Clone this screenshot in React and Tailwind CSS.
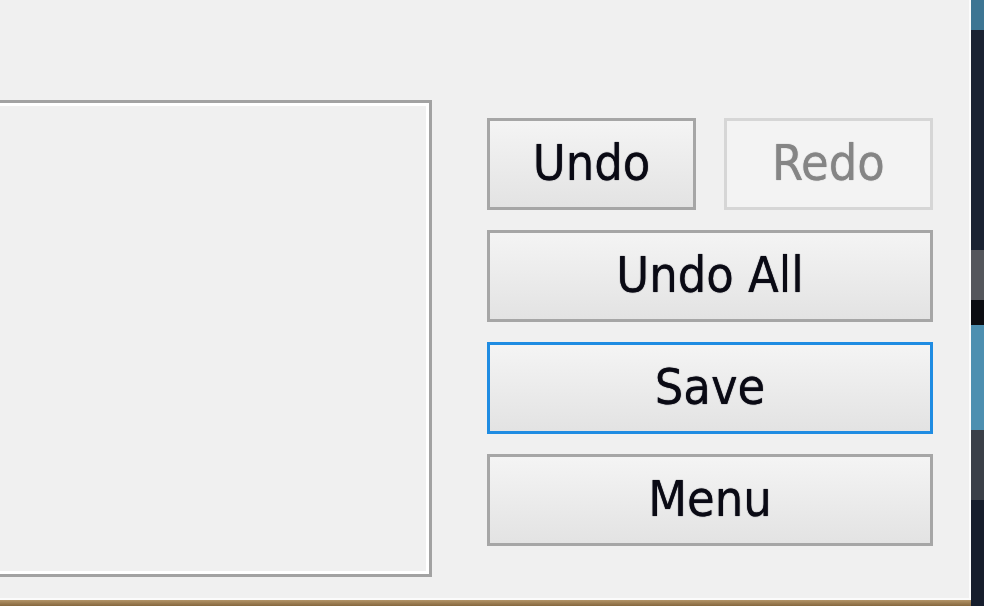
const font = { fontFamily: '"DejaVu Sans Condensed", "DejaVu Sans", "Liberation Sans", sans-serif' };

function WinButton({ label, disabled, focused, className = '' }) {
  const border = focused
    ? 'border-[#1f8ce2]'
    : disabled
      ? 'border-[#d6d6d6]'
      : 'border-[#a6a6a6]';
  const face = disabled
    ? 'bg-[#f3f3f3] text-[#858585]'
    : 'bg-gradient-to-b from-[#f4f4f4] to-[#e3e3e3] text-[#0a0a14]';
  return (
    <div
      className={`h-[92px] border-[3px] ${border} ${face} flex items-center justify-center text-[50px] leading-none font-stretch-condensed ${className}`}
    >
      <span className="-mt-[3px] [text-shadow:0_0_1px_currentColor]">{label}</span>
    </div>
  );
}

export default function App() {
  return (
    <div className="w-[984px] h-[606px] flex overflow-hidden bg-[#141a26]" style={font}>
      {/* dialog */}
      <div className="w-[971px] h-full flex flex-col">
        <div className="flex-1 bg-[#f0f0f0] border-r-[2px] border-r-[#fbfbfb] border-b-[2px] border-b-[#fbfbfb] flex items-start overflow-hidden">
          {/* group box, cut off at the left edge */}
          <div className="-ml-[10px] mt-[100px] w-[442px] h-[477px] shrink-0 border-[3px] border-[#a2a2a2]">
            <div className="w-full h-full border-[3px] border-white" />
          </div>

          {/* button column */}
          <div className="ml-[55px] mt-[118px] w-[446px] shrink-0 flex flex-col gap-[20px]">
            <div className="flex gap-[28px]">
              <WinButton label="Undo" className="flex-1" />
              <WinButton label="Redo" disabled className="flex-1" />
            </div>
            <WinButton label="Undo All" />
            <WinButton label="Save" focused />
            <WinButton label="Menu" />
          </div>
        </div>
        <div className="h-[6px] bg-gradient-to-b from-[#b39468] to-[#86673d]" />
      </div>

      {/* desktop peeking through on the right */}
      <div className="flex-1 flex flex-col">
        <div className="h-[30px] bg-[#3d7593]" />
        <div className="h-[220px] bg-[#1a2232]" />
        <div className="h-[50px] bg-[#54565c]" />
        <div className="h-[25px] bg-[#0b0d12]" />
        <div className="h-[105px] bg-[#4d8fb0]" />
        <div className="h-[70px] bg-[#3a3f48]" />
        <div className="flex-1 bg-[#161d2c]" />
      </div>
    </div>
  );
}
